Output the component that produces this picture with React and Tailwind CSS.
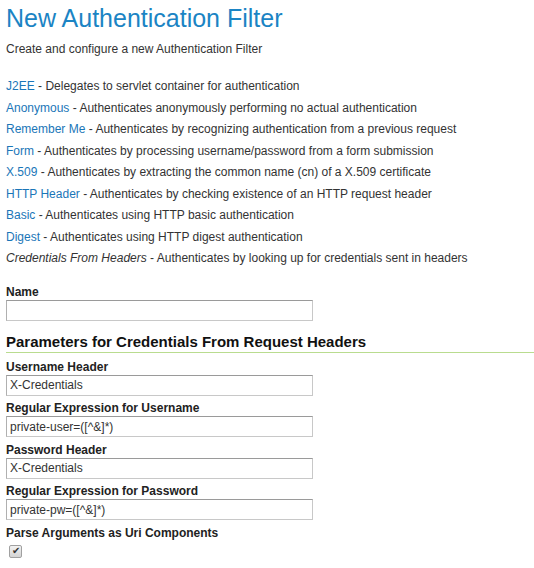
import React from "react";

const filters = [
  { name: "J2EE", desc: "Delegates to servlet container for authentication" },
  { name: "Anonymous", desc: "Authenticates anonymously performing no actual authentication" },
  { name: "Remember Me", desc: "Authenticates by recognizing authentication from a previous request" },
  { name: "Form", desc: "Authenticates by processing username/password from a form submission" },
  { name: "X.509", desc: "Authenticates by extracting the common name (cn) of a X.509 certificate" },
  { name: "HTTP Header", desc: "Authenticates by checking existence of an HTTP request header" },
  { name: "Basic", desc: "Authenticates using HTTP basic authentication" },
  { name: "Digest", desc: "Authenticates using HTTP digest authentication" },
  { name: "Credentials From Headers", desc: "Authenticates by looking up for credentials sent in headers", active: true },
];

const params = [
  { label: "Username Header", value: "X-Credentials" },
  { label: "Regular Expression for Username", value: "private-user=([^&]*)" },
  { label: "Password Header", value: "X-Credentials" },
  { label: "Regular Expression for Password", value: "private-pw=([^&]*)" },
];

function Field({ label, value }) {
  return (
    <div className="mb-[4.5px]">
      <div className="h-[16px] text-[12px] font-bold leading-[16px] text-[#222]">{label}</div>
      <input
        readOnly
        value={value}
        className="block h-[21px] w-[307px] border border-[#c8c8c8] border-t-[#9a9a9a] border-l-[#b0b0b0] bg-white px-[3px] text-[12px] text-[#333] outline-none"
        style={{ fontFamily: '"Liberation Sans", Arial, sans-serif' }}
      />
    </div>
  );
}

export default function App() {
  return (
    <div
      className="min-h-[568px] w-[534px] bg-white pl-[6px] pt-[3px] text-[#333]"
      style={{ fontFamily: '"Liberation Sans", Arial, sans-serif' }}
    >
      <h1 className="text-[25px] font-normal leading-[30px] text-[#1b84c4]">New Authentication Filter</h1>
      <p className="mt-[8px] text-[12px] leading-[16px]">Create and configure a new Authentication Filter</p>

      <ul className="mt-[19px] text-[12px] leading-[21.5px]">
        {filters.map((f) => (
          <li key={f.name}>
            {f.active ? (
              <span className="italic text-[#333]">{f.name}</span>
            ) : (
              <a className="text-[#1a76b8]">{f.name}</a>
            )}{" "}
            - {f.desc}
          </li>
        ))}
      </ul>

      <div className="mt-[14px]">
        <div className="h-[16px] text-[12px] font-bold leading-[16px] text-[#222]">Name</div>
        <input
          readOnly
          value=""
          className="block h-[21px] w-[307px] border border-[#c8c8c8] border-t-[#9a9a9a] border-l-[#b0b0b0] bg-white px-[3px] text-[12px] outline-none"
        />
      </div>

      <h2 className="mt-[11px] border-b border-[#b9dc8f] text-[15px] font-bold leading-[20px] text-[#111]">
        Parameters for Credentials From Request Headers
      </h2>

      <div className="mt-[6px]">
        {params.map((p) => (
          <Field key={p.label} label={p.label} value={p.value} />
        ))}
        <div className="h-[16px] text-[12px] font-bold leading-[16px] text-[#222]">Parse Arguments as Uri Components</div>
        <div className="ml-[3px] mt-[4px] flex h-[13px] w-[13px] items-center justify-center rounded-[2px] border border-[#a0a0a0] bg-gradient-to-b from-[#f2f2f2] to-[#d4d4d4] text-[10px] leading-none text-[#333]">
          ✔
        </div>
      </div>
    </div>
  );
}
